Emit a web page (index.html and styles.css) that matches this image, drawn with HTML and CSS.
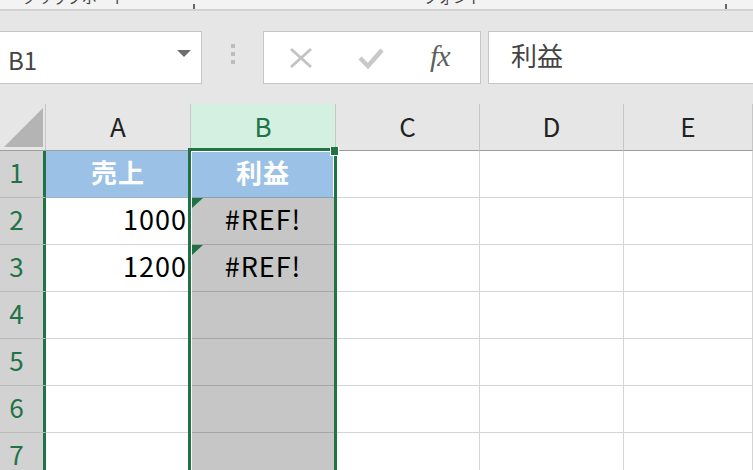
FILE: index.html
```html
<!DOCTYPE html>
<html lang="ja">
<head>
    <meta charset="UTF-8">
    <title>Excel</title>
    <link rel="stylesheet" href="styles.css">
</head>
<body>
    <div class="ribbon-tail">
        <span class="group-label label-clip">クリップボード</span>
        <span class="launcher launcher-clip"></span>
        <span class="group-label label-font">フォント</span>
        <span class="launcher launcher-font"></span>
    </div>

    <div class="formula-bar">
        <div class="name-box">
            <span class="name-text">B1</span>
            <span class="name-arrow"></span>
        </div>
        <div class="grip">
            <i></i><i></i><i></i>
        </div>
        <div class="fx-buttons">
            <svg class="fx-cancel" width="26" height="22" viewBox="0 0 26 22">
                <path d="M3 2 L23 20 M23 2 L3 20" stroke="#c3c3c3" stroke-width="3" fill="none"/>
            </svg>
            <svg class="fx-enter" width="26" height="22" viewBox="0 0 26 22">
                <path d="M2 11 L10 19 L24 3" stroke="#c8c8c8" stroke-width="4.5" fill="none"/>
            </svg>
            <span class="fx-label">fx</span>
        </div>
        <div class="formula-input">利益</div>
    </div>

    <div class="sheet">
        <div class="corner"><span class="corner-tri"></span></div>
        <div class="col-head">A</div>
        <div class="col-head col-selected">B</div>
        <div class="col-head">C</div>
        <div class="col-head">D</div>
        <div class="col-head">E</div>

        <div class="row-head">1</div>
        <div class="cell head-fill">売上</div>
        <div class="cell head-fill in-sel active">利益</div>
        <div class="cell"></div>
        <div class="cell"></div>
        <div class="cell"></div>

        <div class="row-head">2</div>
        <div class="cell num">1000</div>
        <div class="cell in-sel err">#REF!</div>
        <div class="cell"></div>
        <div class="cell"></div>
        <div class="cell"></div>

        <div class="row-head">3</div>
        <div class="cell num">1200</div>
        <div class="cell in-sel err">#REF!</div>
        <div class="cell"></div>
        <div class="cell"></div>
        <div class="cell"></div>

        <div class="row-head">4</div>
        <div class="cell"></div>
        <div class="cell in-sel"></div>
        <div class="cell"></div>
        <div class="cell"></div>
        <div class="cell"></div>

        <div class="row-head">5</div>
        <div class="cell"></div>
        <div class="cell in-sel"></div>
        <div class="cell"></div>
        <div class="cell"></div>
        <div class="cell"></div>

        <div class="row-head">6</div>
        <div class="cell"></div>
        <div class="cell in-sel"></div>
        <div class="cell"></div>
        <div class="cell"></div>
        <div class="cell"></div>

        <div class="row-head">7</div>
        <div class="cell"></div>
        <div class="cell in-sel"></div>
        <div class="cell"></div>
        <div class="cell"></div>
        <div class="cell"></div>

        <!-- рамка виділення стовпця B -->
        <div class="selection"></div>
        <div class="fill-handle"></div>
    </div>
</body>
</html>
```

FILE: styles.css
```css
* {
    box-sizing: border-box;
    margin: 0;
    padding: 0;
}

body {
    width: 753px;
    height: 470px;
    overflow: hidden;
    background-color: #e6e6e6;
    font-family: "Noto Sans CJK JP", "Noto Sans", sans-serif;
    color: #000;
}

/* нижній край стрічки */
.ribbon-tail {
    position: relative;
    height: 11px;
    background-color: #f3f3f3;
    border-bottom: 2px solid #d2d2d2;
    overflow: hidden;
}

.group-label {
    position: absolute;
    top: -12px;
    font-size: 15px;
    line-height: 17px;
    color: #444;
}

.label-clip {
    left: 22px;
}

.label-font {
    left: 423px;
}

.launcher {
    position: absolute;
    top: 4px;
    width: 9px;
    height: 9px;
    border-left: 2px solid #666;
    border-bottom: 2px solid #666;
}

.launcher-clip {
    left: 193px;
}

.launcher-font {
    left: 725px;
}

/* рядок формул */
.formula-bar {
    display: flex;
    align-items: center;
    height: 93px;
}

.name-box {
    display: flex;
    align-items: center;
    justify-content: space-between;
    width: 202px;
    height: 53px;
    background-color: #fff;
    border: 1px solid #c6c6c6;
    border-left: none;
    padding: 0 10px 0 8px;
}

.name-text {
    font-size: 24px;
    color: #444;
    padding-top: 4px;
}

.name-arrow {
    width: 0;
    height: 0;
    border-left: 7px solid transparent;
    border-right: 7px solid transparent;
    border-top: 7px solid #6d6d6d;
    margin-top: -8px;
}

.grip {
    display: flex;
    flex-direction: column;
    gap: 4px;
    width: 61px;
    align-items: center;
    margin-top: -8px;
}

.grip i {
    display: block;
    width: 4px;
    height: 4px;
    background-color: #bdbdbd;
}

.fx-buttons {
    display: flex;
    align-items: center;
    width: 218px;
    height: 53px;
    background-color: #fff;
    border: 1px solid #c6c6c6;
    padding-left: 24px;
    gap: 46px;
}

.fx-enter {
    margin-left: -2px;
}

.fx-label {
    font-family: "Liberation Serif", "DejaVu Serif", serif;
    font-style: italic;
    font-size: 30px;
    color: #5f5f5f;
    letter-spacing: -1px;
    margin-top: -4px;
}

.formula-input {
    flex: 1;
    height: 53px;
    margin-left: 7px;
    background-color: #fff;
    border: 1px solid #c6c6c6;
    border-right: none;
    padding-left: 22px;
    font-size: 26px;
    line-height: 46px;
    color: #444;
}

/* аркуш */
.sheet {
    position: relative;
    display: grid;
    grid-template-columns: 46px 145px 145px 144px 144px 1fr;
    grid-template-rows: 47px repeat(7, 47px);
}

.corner {
    position: relative;
    border-right: 1px solid #c6c6c6;
    border-bottom: 1px solid #9e9e9e;
}

.corner-tri {
    position: absolute;
    left: 4px;
    top: 4px;
    width: 0;
    height: 0;
    border-left: 39px solid transparent;
    border-bottom: 39px solid #b4b4b4;
}

.col-head {
    display: flex;
    align-items: center;
    justify-content: center;
    font-size: 26px;
    color: #222;
    background-color: #e6e6e6;
    border-right: 1px solid #c6c6c6;
    border-bottom: 1px solid #9e9e9e;
    padding-bottom: 4px;
}

.col-selected {
    background-color: #d3f0e0;
    color: #217346;
    border-bottom-color: #217346;
    box-shadow: inset 0 -2px 0 #217346;
}

.row-head {
    display: flex;
    align-items: center;
    justify-content: center;
    font-size: 26px;
    color: #217346;
    background-color: #d2d2d2;
    border-right: 1px solid #217346;
    border-bottom: 1px solid #bababa;
    box-shadow: inset -2px 0 0 #217346;
    padding: 0 12px 6px 0;
}

.cell {
    display: flex;
    align-items: center;
    justify-content: center;
    font-size: 27px;
    letter-spacing: 1px;
    background-color: #fff;
    border-right: 1px solid #d4d4d4;
    border-bottom: 1px solid #d4d4d4;
    padding-bottom: 6px;
}

.head-fill {
    background-color: #9bc2e6;
    color: #fff;
    font-weight: bold;
    font-size: 26px;
    border-bottom-color: #9db3c9;
}

.num {
    justify-content: flex-end;
    padding-right: 3px;
}

.in-sel {
    background-color: #c6c6c6;
    border-bottom-color: #a6a6a6;
}

.in-sel.active {
    background-color: #9bc2e6;
    border-bottom-color: #8a9fb3;
    box-shadow: inset 0 1px 0 #fff, inset -2px 0 0 #fff;
}

.err {
    position: relative;
}

.err::before {
    content: "";
    position: absolute;
    left: 1px;
    top: 0;
    width: 0;
    height: 0;
    border-top: 10px solid #1e7145;
    border-right: 11px solid transparent;
}

.selection {
    position: absolute;
    left: 188px;
    top: 44px;
    width: 149px;
    height: 340px;
    border: 3px solid #217346;
    box-shadow: inset 1px 0 0 #fff;
    pointer-events: none;
}

.fill-handle {
    position: absolute;
    left: 330px;
    top: 43px;
    width: 9px;
    height: 9px;
    background-color: #217346;
    border: 1px solid #fff;
    border-top: none;
}
```
